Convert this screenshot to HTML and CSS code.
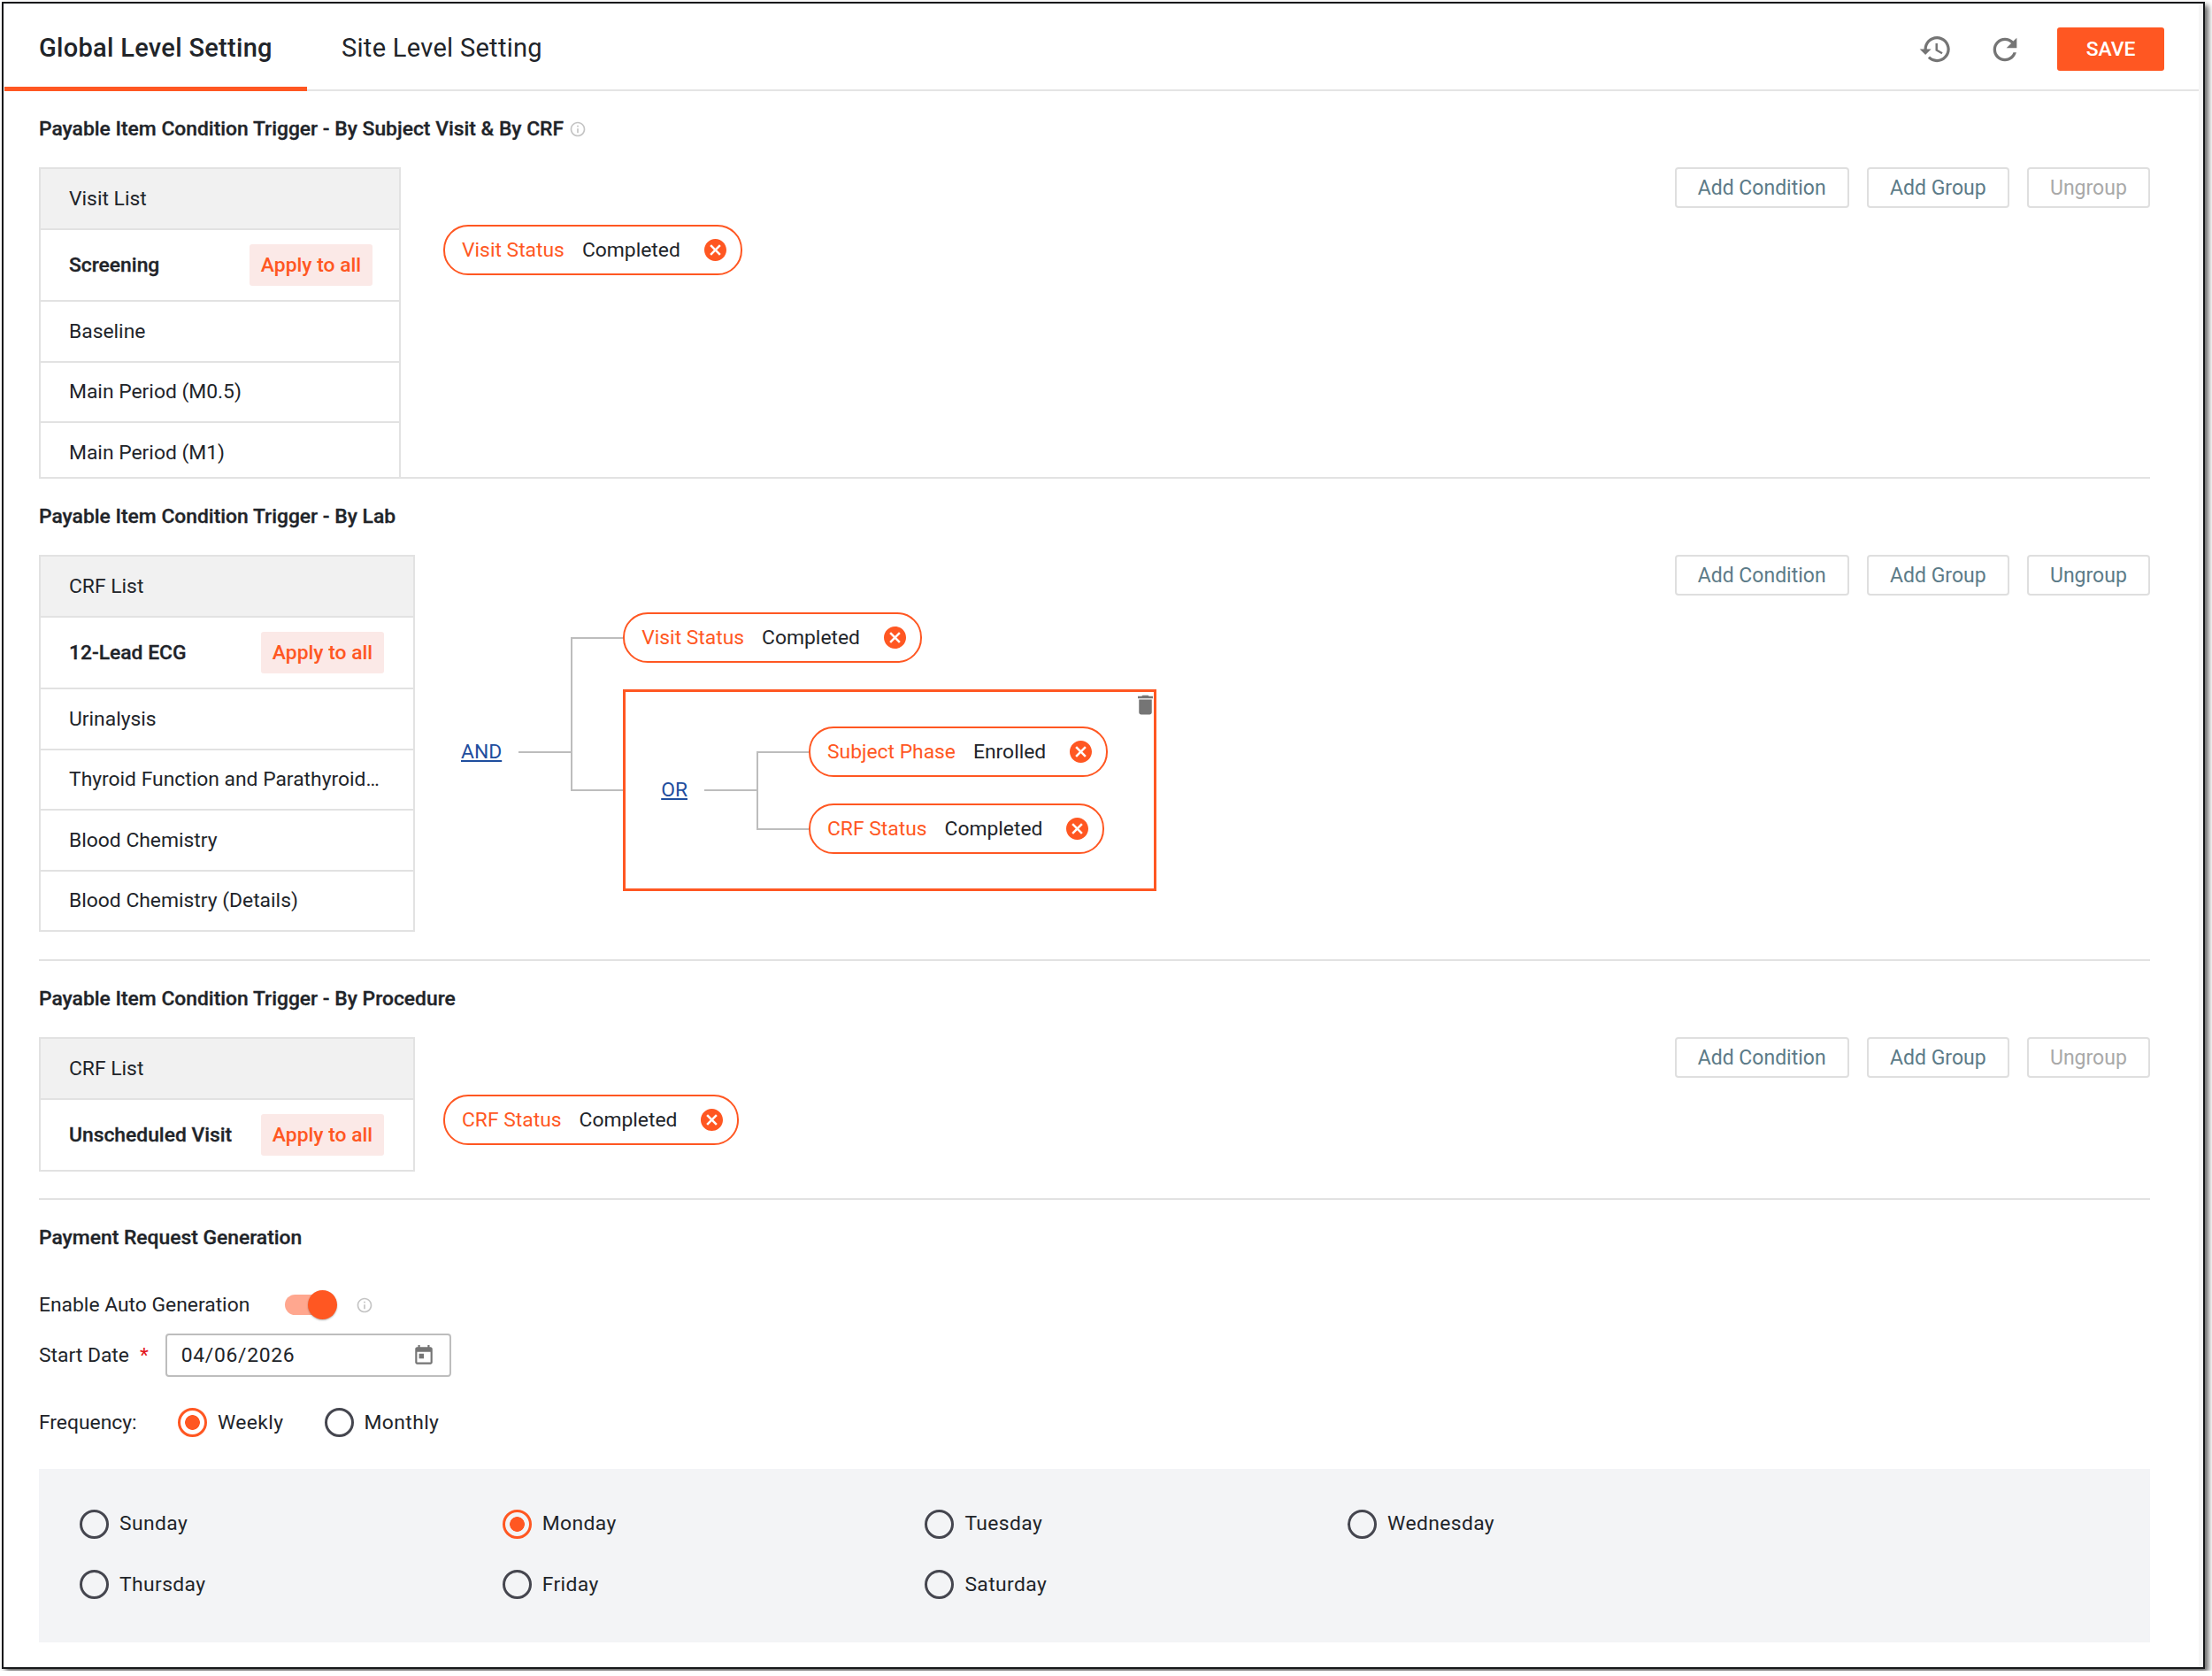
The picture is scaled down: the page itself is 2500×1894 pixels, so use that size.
FILE: index.html
```html
<!DOCTYPE html>
<html lang="en">
<head>
  <meta charset="UTF-8">
  <meta name="viewport" content="width=device-width, initial-scale=1.0">
  <title>Payment Settings</title>
  <link rel="stylesheet" href="styles.css">
</head>
<body>

  <!-- shared icons -->
  <svg class="sprite" width="0" height="0">
    <symbol id="i-info" viewBox="0 0 24 24">
      <path d="M11 7h2v2h-2zm0 4h2v6h-2zm1-9C6.48 2 2 6.48 2 12s4.48 10 10 10 10-4.48 10-10S17.52 2 12 2zm0 18c-4.41 0-8-3.59-8-8s3.59-8 8-8 8 3.59 8 8-3.59 8-8 8z"/>
    </symbol>
    <symbol id="i-cancel" viewBox="2 2 20 20">
      <path d="M12 2C6.47 2 2 6.47 2 12s4.47 10 10 10 10-4.47 10-10S17.53 2 12 2zm5 13.59L15.59 17 12 13.41 8.41 17 7 15.59 10.59 12 7 8.41 8.41 7 12 10.59 15.59 7 17 8.41 13.41 12 17 15.59z"/>
    </symbol>
  </svg>

  <div class="window">
    <header class="header">
      <nav class="tabs">
        <a class="tab active">Global Level Setting</a>
        <a class="tab">Site Level Setting</a>
      </nav>
      <div class="header-actions">
        <svg class="icon-history" viewBox="0 0 24 24"><path d="M13 3c-4.97 0-9 4.03-9 9H1l3.89 3.89.07.14L9 12H6c0-3.87 3.13-7 7-7s7 3.13 7 7-3.13 7-7 7c-1.93 0-3.68-.79-4.94-2.06l-1.42 1.42C8.27 19.99 10.51 21 13 21c4.97 0 9-4.03 9-9s-4.03-9-9-9zm-1 5v5l4.28 2.54.72-1.21-3.5-2.08V8H12z"/></svg>
        <svg class="icon-refresh" viewBox="0 0 24 24"><path d="M17.65 6.35C16.2 4.9 14.21 4 12 4c-4.42 0-7.99 3.58-7.99 8s3.57 8 7.99 8c3.73 0 6.84-2.55 7.73-6h-2.08c-.82 2.33-3.04 4-5.65 4-3.31 0-6-2.69-6-6s2.69-6 6-6c1.66 0 3.14.69 4.22 1.78L13 11h7V4l-2.35 2.35z"/></svg>
        <button class="save">SAVE</button>
      </div>
    </header>

    <main class="content">
      <section class="section visit">
        <h2>Payable Item Condition Trigger - By Subject Visit &amp; By CRF <svg class="info"><use href="#i-info"/></svg></h2>
        <div class="section-body">
          <div class="list">
            <div class="list-head">Visit List</div>
            <div class="list-row selected"><span>Screening</span><button class="apply">Apply to all</button></div>
            <div class="list-row">Baseline</div>
            <div class="list-row">Main Period (M0.5)</div>
            <div class="list-row">Main Period (M1)</div>
          </div>
          <div class="tree">
            <div class="chip"><span class="key">Visit Status</span><span>Completed</span><svg><use href="#i-cancel"/></svg></div>
          </div>
          <div class="actions">
            <button>Add Condition</button>
            <button>Add Group</button>
            <button disabled>Ungroup</button>
          </div>
        </div>
      </section>

      <section class="section lab">
        <h2>Payable Item Condition Trigger - By Lab</h2>
        <div class="section-body">
          <div class="list">
            <div class="list-head">CRF List</div>
            <div class="list-row selected"><span>12-Lead ECG</span><button class="apply">Apply to all</button></div>
            <div class="list-row">Urinalysis</div>
            <div class="list-row">Thyroid Function and Parathyroid…</div>
            <div class="list-row">Blood Chemistry</div>
            <div class="list-row">Blood Chemistry (Details)</div>
          </div>
          <div class="tree">
            <div class="group">
              <a class="operator">AND</a>
              <div class="branch">
                <div class="node">
                  <div class="chip"><span class="key">Visit Status</span><span>Completed</span><svg><use href="#i-cancel"/></svg></div>
                </div>
                <div class="node">
                  <div class="group boxed">
                    <svg class="trash" viewBox="0 0 24 24"><path d="M6 19c0 1.1.9 2 2 2h8c1.1 0 2-.9 2-2V7H6v12zM19 4h-3.5l-1-1h-5l-1 1H5v2h14V4z"/></svg>
                    <a class="operator">OR</a>
                    <div class="branch">
                      <div class="node">
                        <div class="chip"><span class="key">Subject Phase</span><span>Enrolled</span><svg><use href="#i-cancel"/></svg></div>
                      </div>
                      <div class="node">
                        <div class="chip"><span class="key">CRF Status</span><span>Completed</span><svg><use href="#i-cancel"/></svg></div>
                      </div>
                    </div>
                  </div>
                </div>
              </div>
            </div>
          </div>
          <div class="actions">
            <button>Add Condition</button>
            <button>Add Group</button>
            <button>Ungroup</button>
          </div>
        </div>
      </section>

      <section class="section procedure">
        <h2>Payable Item Condition Trigger - By Procedure</h2>
        <div class="section-body">
          <div class="list">
            <div class="list-head">CRF List</div>
            <div class="list-row selected"><span>Unscheduled Visit</span><button class="apply">Apply to all</button></div>
          </div>
          <div class="tree">
            <div class="chip"><span class="key">CRF Status</span><span>Completed</span><svg><use href="#i-cancel"/></svg></div>
          </div>
          <div class="actions">
            <button>Add Condition</button>
            <button>Add Group</button>
            <button disabled>Ungroup</button>
          </div>
        </div>
      </section>

      <section class="payment">
        <h2>Payment Request Generation</h2>
        <div class="form-row auto">
          <span>Enable Auto Generation</span>
          <span class="switch"></span>
          <svg class="info"><use href="#i-info"/></svg>
        </div>
        <div class="form-row date">
          <span>Start Date</span><span class="required">*</span>
          <div class="date-input">
            <span>04/06/2026</span>
            <svg viewBox="0 0 24 24"><path d="M19 3h-1V1h-2v2H8V1H6v2H5c-1.11 0-1.99.9-1.99 2L3 19c0 1.1.89 2 2 2h14c1.1 0 2-.9 2-2V5c0-1.1-.9-2-2-2zm0 16H5V8h14v11zM7 10h5v5H7z"/></svg>
          </div>
        </div>
        <div class="form-row frequency">
          <span class="frequency-label">Frequency:</span>
          <label class="radio checked">Weekly</label>
          <label class="radio">Monthly</label>
        </div>
        <div class="days">
          <label class="radio">Sunday</label>
          <label class="radio checked">Monday</label>
          <label class="radio">Tuesday</label>
          <label class="radio">Wednesday</label>
          <label class="radio">Thursday</label>
          <label class="radio">Friday</label>
          <label class="radio">Saturday</label>
        </div>
      </section>
    </main>
  </div>

</body>
</html>
```
FILE: styles.css
```css
*,
*::before,
*::after {
  box-sizing: border-box;
}

body {
  margin: 0;
  padding: 2px;
  background: #fff;
  font-family: Roboto, "Liberation Sans", sans-serif;
  font-size: 22.85px;
  line-height: 28px;
  color: #212429;
}

button {
  font: inherit;
  padding: 0;
  white-space: nowrap;
}

.sprite {
  position: absolute;
}

.window {
  width: 2490px;
  height: 1884px;
  border: 2px solid #16181a;
  background: linear-gradient(#f7f7f7, #f7f7f7) right / 5px 100% no-repeat #fff;
  box-shadow: 4px 4px 6px rgba(0, 0, 0, 0.6);
}

/* header */
.header {
  display: flex;
  justify-content: space-between;
  height: 99px;
  margin: 0 5px 0 1px;
  border-bottom: 2px solid #e4e4e4;
}

.tabs {
  display: flex;
}

.tab {
  height: 99px;
  padding: 33px 39px 0;
  font-size: 29px;
  line-height: 34px;
  letter-spacing: 0.3px;
}

.tab.active {
  width: 342px;
  font-weight: 500;
  border-bottom: 5px solid #ff5722;
}

.header-actions {
  display: flex;
  align-items: center;
  height: 103px;
  padding-right: 39px;
}

.header-actions svg {
  fill: #757575;
}

.icon-history {
  width: 39px;
  height: 39px;
}

.icon-refresh {
  width: 40px;
  height: 40px;
  margin: 0 39px;
}

.save {
  width: 121px;
  height: 49px;
  border: none;
  border-radius: 3px;
  background: #ff5722;
  color: #fff;
  font-weight: 500;
}

/* sections */
.content {
  width: 2386px;
  margin-left: 40px;
}

.section {
  border-bottom: 2px solid #e2e2e2;
}

.visit {
  height: 438px;
}

.lab {
  height: 545px;
}

.procedure {
  height: 270px;
}

h2 {
  display: flex;
  align-items: center;
  height: 86px;
  margin: 0;
  padding: 29px 0;
  font-size: 22.85px;
  font-weight: 500;
  -webkit-text-stroke: 0.3px;
}

.info {
  width: 20px;
  height: 20px;
  margin-left: 6px;
  fill: #c4c4c4;
}

.section-body {
  display: flex;
}

.list {
  flex: none;
  width: 425px;
  border: 2px solid #e2e2e2;
}

.visit .list {
  width: 409px;
  height: 350px;
  margin-right: 16px;
  border-bottom: none;
  overflow: hidden;
}

.list-head,
.list-row {
  display: flex;
  align-items: center;
  height: 68.5px;
  padding: 1px 32px 0;
  border-bottom: 2px solid #e2e2e2;
  white-space: nowrap;
}

.list-head {
  background: #f1f1f1;
}

.list-row.selected {
  justify-content: space-between;
  height: 81.5px;
  padding-right: 30px;
  font-weight: 500;
}

.selected span {
  -webkit-text-stroke: 0.3px;
}

.lab .selected,
.procedure .selected {
  padding-right: 33px;
}

.lab .list-row:last-child {
  height: 66px;
  border-bottom: none;
}

.procedure .list-row.selected {
  height: 79.5px;
  border-bottom: none;
}

.apply {
  width: 139px;
  height: 47px;
  border: none;
  border-radius: 3px;
  background: #fbe9e7;
  color: #ff5722;
  font-weight: 500;
}

.tree {
  flex: 1;
  padding: 65px 0 0 32px;
}

.actions {
  display: flex;
  gap: 20px;
}

.actions button {
  height: 46px;
  padding: 1px 24.2px 0;
  border: 2px solid #dfdfdf;
  border-radius: 4px;
  background: #fff;
  color: #5c7b88;
  font-size: 23px;
}

.actions button:disabled {
  color: #a9a9a9;
}

/* condition chips */
.chip {
  display: inline-flex;
  align-items: center;
  height: 57px;
  padding: 0 16px 0 19px;
  border: 2px solid #ff5722;
  border-radius: 28px;
  white-space: nowrap;
  vertical-align: top;
}

.chip .key {
  margin-right: 20px;
  color: #ff5722;
}

.chip svg {
  width: 25px;
  height: 25px;
  margin-left: 27px;
  fill: #ff5722;
}

/* condition tree */
.group {
  display: flex;
  align-items: center;
}

.operator {
  position: relative;
  margin-left: 20px;
  margin-right: 78px;
  color: #1f4e9e;
  text-decoration: underline;
}

.operator::after {
  content: "";
  position: absolute;
  top: 50%;
  right: -78px;
  width: 59px;
  height: 2px;
  margin-top: -1px;
  background: #bdbdbd;
}

.node {
  position: relative;
  width: fit-content;
  padding-left: 59px;
}

.node + .node {
  margin-top: 30px;
}

.node::before {
  content: "";
  position: absolute;
  top: calc(50% - 1px);
  left: 0;
  width: 59px;
  height: 2px;
  background: #bdbdbd;
}

.node::after {
  content: "";
  position: absolute;
  left: 0;
  width: 2px;
  background: #bdbdbd;
}

.node:first-child::after {
  top: 50%;
  bottom: -30px;
}

.node:last-child::after {
  top: 0;
  bottom: 50%;
}

.boxed {
  position: relative;
  padding: 39px 52px 39px 20px;
  border: 3px solid #ff5722;
}

.trash {
  position: absolute;
  top: 0;
  right: -5px;
  width: 29px;
  height: 29px;
  fill: #757575;
}

/* payment request generation */
.form-row {
  display: flex;
  align-items: center;
}

.auto {
  height: 65px;
}

.switch {
  position: relative;
  width: 54px;
  height: 23px;
  margin: 0 20px 0 40px;
  border-radius: 12px;
  background: #ffa78f;
}

.switch::after {
  content: "";
  position: absolute;
  top: -5px;
  right: -5px;
  width: 33px;
  height: 33px;
  border-radius: 50%;
  background: #ff5722;
  box-shadow: 0 1px 2px rgba(0, 0, 0, 0.3);
}

.date {
  height: 49px;
}

.required {
  margin: 0 19px 0 12px;
  color: #e3141b;
}

.date-input {
  display: flex;
  justify-content: space-between;
  align-items: center;
  width: 323px;
  height: 49px;
  padding: 0 16px;
  border: 2px solid #bdbdbd;
  border-radius: 4px;
  letter-spacing: 0.7px;
}

.date-input svg {
  width: 26px;
  height: 26px;
  fill: #757575;
}

.frequency {
  height: 104px;
  padding-bottom: 1px;
}

.frequency-label {
  width: 157px;
}

.radio {
  display: flex;
  align-items: center;
  letter-spacing: 0.4px;
}

.radio::before {
  content: "";
  width: 33px;
  height: 33px;
  margin-right: 12px;
  border: 3px solid #45464f;
  border-radius: 50%;
}

.radio.checked::before {
  border-color: #ff5722;
  background: radial-gradient(circle, #ff5722 8px, transparent 8.7px);
}

.frequency .radio {
  margin-right: 46px;
}

.days {
  display: grid;
  grid-template-columns: repeat(4, 477.7px);
  grid-auto-rows: 68.5px;
  height: 196px;
  padding-top: 28px;
  background: #f3f4f6;
}

.days .radio {
  padding-left: 46px;
}
```
